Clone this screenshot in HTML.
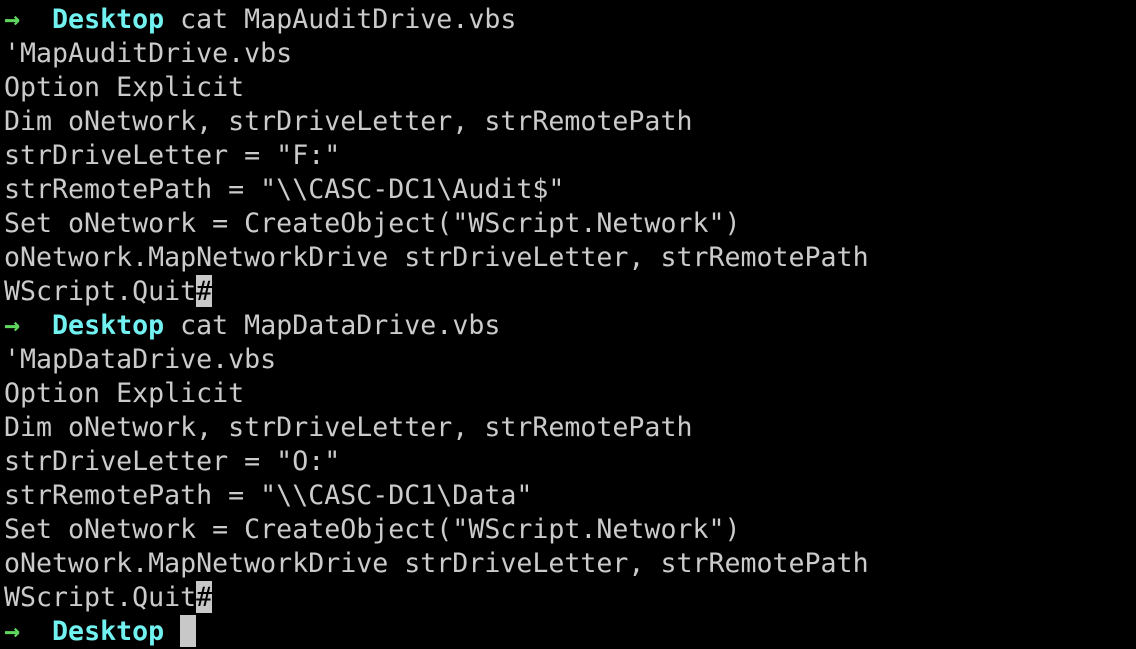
<!DOCTYPE html><html><head><style>
html,body{margin:0;background:#000;width:1136px;height:644px;overflow:hidden}
pre{margin:0;position:absolute;left:4px;top:3px;font-family:"DejaVu Sans Mono","Liberation Mono",monospace;font-size:26.6px;line-height:34px;color:#cbcbcb}
.a{color:#5fd75f;font-weight:bold}.d{color:#72f1f1;font-weight:bold}
.c{background:#c8c8c8;color:#000;display:inline-block;height:32px;line-height:34px;vertical-align:top}
</style></head><body><pre><span class="a">→</span>  <span class="d">Desktop</span> cat MapAuditDrive.vbs
'MapAuditDrive.vbs
Option Explicit
Dim oNetwork, strDriveLetter, strRemotePath
strDriveLetter = "F:"
strRemotePath = "\\CASC-DC1\Audit$"
Set oNetwork = CreateObject("WScript.Network")
oNetwork.MapNetworkDrive strDriveLetter, strRemotePath
WScript.Quit<span class="c">#</span>
<span class="a">→</span>  <span class="d">Desktop</span> cat MapDataDrive.vbs
'MapDataDrive.vbs
Option Explicit
Dim oNetwork, strDriveLetter, strRemotePath
strDriveLetter = "O:"
strRemotePath = "\\CASC-DC1\Data"
Set oNetwork = CreateObject("WScript.Network")
oNetwork.MapNetworkDrive strDriveLetter, strRemotePath
WScript.Quit<span class="c">#</span>
<span class="a">→</span>  <span class="d">Desktop</span> <span class="c"> </span></pre></body></html>
